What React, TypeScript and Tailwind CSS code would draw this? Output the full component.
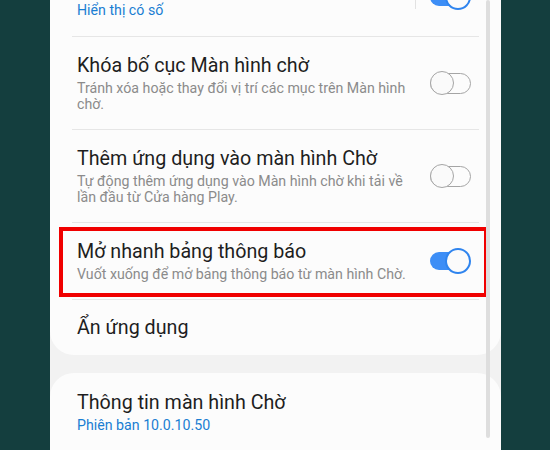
import React from "react";

function Toggle({ on }: { on: boolean }) {
  if (on) {
    return (
      <div className="relative w-[41px] h-[26px] flex items-center shrink-0">
        <div className="w-[40px] h-[18px] rounded-full bg-[#3d8ef6]" />
        <div className="absolute right-0 top-0 w-[26px] h-[26px] rounded-full bg-[#fbfbfb] border-[2px] border-[#2f84ee]" />
      </div>
    );
  }
  return (
    <div className="relative w-[41px] h-[24px] flex items-center shrink-0">
      <div className="w-[41px] h-[21px] rounded-full border-[1.5px] border-[#a5a5a5]" />
      <div className="absolute left-0 top-0 w-[24px] h-[24px] rounded-full bg-[#fafafa] border-[1.5px] border-[#a5a5a5]" />
    </div>
  );
}

function Divider() {
  return <div className="mx-[22px] h-px bg-[#e6e6e6]" />;
}

function Row({
  title,
  sub,
  on,
  highlight,
}: {
  title: string;
  sub: string[];
  on: boolean;
  highlight?: boolean;
}) {
  return (
    <div className="relative flex items-center pl-[27px] pr-[30px] pt-[17px] pb-[17px]">
      <div className="flex-1 min-w-0">
        <div className="text-[19.7px] leading-[24px] text-[#1e1e1e]">{title}</div>
        <div className="mt-[2px] text-[14.2px] leading-[16px] text-[#8b8b8b]">
          {sub.map((s, i) => (
            <div key={i}>{s}</div>
          ))}
        </div>
      </div>
      <div className="ml-[16px]">
        <Toggle on={on} />
      </div>
      {highlight && (
        <div className="absolute left-[9px] top-[4px] w-[429px] h-[70px] border-[4px] border-[#f00000]" />
      )}
    </div>
  );
}

export default function App() {
  return (
    <div
      className="w-[550px] h-[450px] bg-[#143e3e] flex overflow-hidden"
      style={{ fontFamily: "Roboto, 'Noto Sans', sans-serif" }}
    >
      <div className="w-[50px] shrink-0" />
      <div className="relative w-[451px] h-[450px] bg-[#f2f2f2] overflow-hidden shrink-0">
        <div className="flex flex-col">
          {/* Card 1 */}
          <div className="bg-[#fcfcfc] rounded-b-[24px]">
            {/* partial row */}
            <div className="relative h-[36px] flex items-start pl-[27px] pr-[30px]">
              <div className="flex-1 pt-[2px] text-[14.2px] leading-[16px] text-[#1a7ed2]">
                Hiển thị có số
              </div>
              <div className="w-px h-[20px] bg-[#e2e2e2] -mt-[11px] mr-[14px]" />
              <div className="-mt-[16px]">
                <Toggle on={true} />
              </div>
            </div>
            <Divider />
            <Row
              title="Khóa bố cục Màn hình chờ"
              sub={["Tránh xóa hoặc thay đổi vị trí các mục trên Màn hình", "chờ."]}
              on={false}
            />
            <Divider />
            <Row
              title="Thêm ứng dụng vào màn hình Chờ"
              sub={["Tự động thêm ứng dụng vào Màn hình chờ khi tải về", "lần đầu từ Cửa hàng Play."]}
              on={false}
            />
            <Divider />
            <Row
              title="Mở nhanh bảng thông báo"
              sub={["Vuốt xuống để mở bảng thông báo từ màn hình Chờ."]}
              on={true}
              highlight
            />
            <Divider />
            <div className="h-[55px] flex items-center pl-[27px]">
              <div className="text-[19.7px] leading-[24px] text-[#1e1e1e]">Ẩn ứng dụng</div>
            </div>
          </div>
          {/* Card 2 */}
          <div className="mt-[18px] bg-[#fcfcfc] rounded-t-[24px] h-[100px] pl-[27px] pt-[18px]">
            <div className="text-[19.7px] leading-[24px] text-[#1e1e1e]">Thông tin màn hình Chờ</div>
            <div className="mt-[2px] text-[14.2px] leading-[16px] text-[#1a7ed2]">Phiên bản 10.0.10.50</div>
          </div>
        </div>
        {/* scrollbar */}
        <div className="absolute left-[436px] top-0 w-[4px] h-[438px] rounded-full bg-[#dedede]" />
      </div>
      <div className="flex-1" />
    </div>
  );
}
